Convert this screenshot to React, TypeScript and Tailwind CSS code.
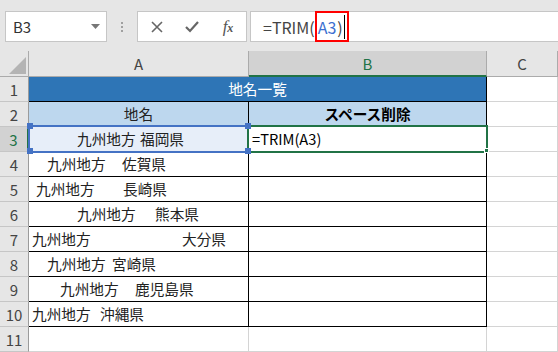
import React from "react";

const F = "font-['Noto_Sans_CJK_JP',sans-serif]";

function RowHead({ n, active }: { n: number; active?: boolean }) {
  return (
    <div
      className={
        active
          ? "w-[29px] h-full shrink-0 flex items-center justify-center bg-[#d2d2d2] border-b border-[#c6c6c6] border-r-2 border-r-[#217346] text-[15px] text-[#217346] leading-none"
          : "w-[29px] h-full shrink-0 flex items-center justify-center bg-[#e6e6e6] border-b border-[#c6c6c6] border-r border-r-[#9b9b9b] text-[15px] text-[#444] leading-none"
      }
    >
      {n}
    </div>
  );
}

function CCell({ last }: { last?: boolean }) {
  return <div className={last ? "w-[71px] h-full shrink-0 border-r border-[#d4d4d4]" : "w-[71px] h-full shrink-0 border-r border-b border-[#d4d4d4]"} />;
}

function DataRow({ n, pl, w, a, b }: { n: number; pl: string; w: string; a: string; b: string }) {
  return (
    <div className="flex h-[25px]">
      <RowHead n={n} />
      <div className={`w-[220px] h-full shrink-0 border-r border-b border-black flex items-center text-[14.67px] text-[#222] leading-none whitespace-nowrap ${pl}`}>
        <span className={`shrink-0 ${w}`}>{a}</span>
        <span>{b}</span>
      </div>
      <div className="w-[238px] h-full shrink-0 border-r border-b border-black" />
      <CCell />
    </div>
  );
}

export default function App() {
  return (
    <div className={`w-[558px] h-[352px] overflow-hidden bg-white ${F}`}>
      {/* toolbar */}
      <div className="h-[51px] bg-[#e6e6e6] flex items-start pt-[11px]">
        <div className="ml-[5px] w-[102px] h-[31px] bg-white border border-[#c6c6c6] flex items-center justify-between pl-[7px] pr-[6px]">
          <span className="text-[15px] text-[#333] leading-none">B3</span>
          <svg width="9" height="6" viewBox="0 0 9 6"><path d="M0 0h9L4.5 5z" fill="#777" /></svg>
        </div>
        <div className="w-[30px] h-[31px] flex flex-col items-center justify-center gap-[2px]">
          <div className="w-[2px] h-[2px] bg-[#a0a0a0]" />
          <div className="w-[2px] h-[2px] bg-[#a0a0a0]" />
          <div className="w-[2px] h-[2px] bg-[#a0a0a0]" />
        </div>
        <div className="w-[110px] h-[31px] bg-white border border-[#c6c6c6] flex items-center">
          <div className="w-[36px] flex justify-center pl-[2px]">
            <svg width="12" height="12" viewBox="0 0 12 12"><path d="M1 1l10 10M11 1L1 11" stroke="#666" strokeWidth="1.6" /></svg>
          </div>
          <div className="w-[36px] flex justify-center">
            <svg width="14" height="12" viewBox="0 0 14 12"><path d="M1 6l4 4 8-9" stroke="#666" strokeWidth="2.2" fill="none" /></svg>
          </div>
          <div className="w-[36px] flex justify-center">
            <span className="font-['Liberation_Serif',serif] italic text-[17px] text-[#555] leading-none">
              f<span className="text-[12px] font-bold">x</span>
            </span>
          </div>
        </div>
        <div className="ml-[3px] flex-1 h-[31px] bg-white border border-[#c6c6c6] border-r-0 flex items-center pl-[12px] relative">
          <span className="text-[16px] text-[#444] leading-none whitespace-nowrap">
            =TRIM(<span className="text-[#3c6fd0] ml-[3px]">A3</span><span className="ml-[1px]">)</span>
          </span>
          <div className="w-[1px] h-[24px] bg-black ml-[1px]" />
          <div className="absolute left-[64px] top-[-1px] w-[34px] h-[31px] border-2 border-[#ff0000]" />
        </div>
      </div>

      {/* column header */}
      <div className="flex h-[26px]">
        <div className="w-[29px] h-full shrink-0 bg-[#e6e6e6] border-r border-b border-[#ababab] flex items-end justify-end pr-[2px] pb-[2px]">
          <svg width="17" height="17" viewBox="0 0 17 17"><path d="M17 0V17H0z" fill="#b4b4b4" /></svg>
        </div>
        <div className="w-[220px] h-full shrink-0 bg-[#e6e6e6] border-r border-b border-[#ababab] flex items-center justify-center text-[15px] text-[#444] leading-none">A</div>
        <div className="w-[238px] h-full shrink-0 bg-[#d2d2d2] border-r border-r-[#ababab] border-b-2 border-b-[#217346] flex items-center justify-center text-[15px] text-[#217346] leading-none">B</div>
        <div className="w-[71px] h-full shrink-0 bg-[#e6e6e6] border-r border-b border-[#ababab] flex items-center justify-center text-[15px] text-[#444] leading-none">C</div>
      </div>

      {/* row 1 */}
      <div className="flex h-[25px]">
        <RowHead n={1} />
        <div className="w-[458px] h-full shrink-0 bg-[#2e75b6] border-r border-b border-black flex items-center justify-center text-[14.67px] text-white leading-none">地名一覧</div>
        <CCell />
      </div>

      {/* row 2 */}
      <div className="flex h-[25px]">
        <RowHead n={2} />
        <div className="w-[220px] h-full shrink-0 bg-[#bdd7ee] border-r border-b border-black flex items-center justify-center text-[14.67px] text-[#222] leading-none">地名</div>
        <div className="w-[238px] h-full shrink-0 bg-[#bdd7ee] border-r border-b border-black flex items-center justify-center text-[14.67px] font-bold text-black leading-none">スペース削除</div>
        <CCell />
      </div>

      {/* row 3 */}
      <div className="flex h-[25px] relative">
        <RowHead n={3} active />
        <div className="w-[220px] h-full shrink-0 bg-[#e7eef9] border-r border-b border-black flex items-center pl-[48px] text-[14.67px] text-[#222] leading-none whitespace-nowrap">
          <span className="shrink-0 w-[63px]">九州地方</span>
          <span>福岡県</span>
        </div>
        <div className="w-[238px] h-full shrink-0 border-r border-b border-black flex items-center pl-[3px] text-[14.67px] text-black leading-none">=TRIM(A3)</div>
        <CCell />
        <div className="absolute left-[28px] top-[-2px] w-[221px] h-[28px] border-2 border-[#4472c4]" />
        <div className="absolute left-[247px] top-[-2px] w-[241px] h-[28px] border-2 border-[#217346]" />
        <div className="absolute left-[27px] top-[-4px] w-[6px] h-[6px] bg-[#4472c4]" />
        <div className="absolute left-[27px] top-[21px] w-[6px] h-[6px] bg-[#4472c4]" />
        <div className="absolute left-[245px] top-[-4px] w-[6px] h-[6px] bg-[#4472c4]" />
        <div className="absolute left-[245px] top-[21px] w-[6px] h-[6px] bg-[#4472c4]" />
        <div className="absolute left-[484px] top-[21px] w-[5px] h-[5px] bg-[#217346] border border-white" />
      </div>

      <DataRow n={4} pl="pl-[18px]" w="w-[75px]" a="九州地方" b="佐賀県" />
      <DataRow n={5} pl="pl-[7px]" w="w-[87px]" a="九州地方" b="長崎県" />
      <DataRow n={6} pl="pl-[48px]" w="w-[78px]" a="九州地方" b="熊本県" />
      <DataRow n={7} pl="pl-[3px]" w="w-[150px]" a="九州地方" b="大分県" />
      <DataRow n={8} pl="pl-[18px]" w="w-[65px]" a="九州地方" b="宮崎県" />
      <DataRow n={9} pl="pl-[31px]" w="w-[75px]" a="九州地方" b="鹿児島県" />
      <DataRow n={10} pl="pl-[3px]" w="w-[68px]" a="九州地方" b="沖縄県" />

      {/* row 11 */}
      <div className="flex h-[25px]">
        <RowHead n={11} />
        <div className="w-[220px] h-full shrink-0 border-r border-b border-[#d4d4d4]" />
        <div className="w-[238px] h-full shrink-0 border-r border-b border-[#d4d4d4]" />
        <CCell />
      </div>
    </div>
  );
}
